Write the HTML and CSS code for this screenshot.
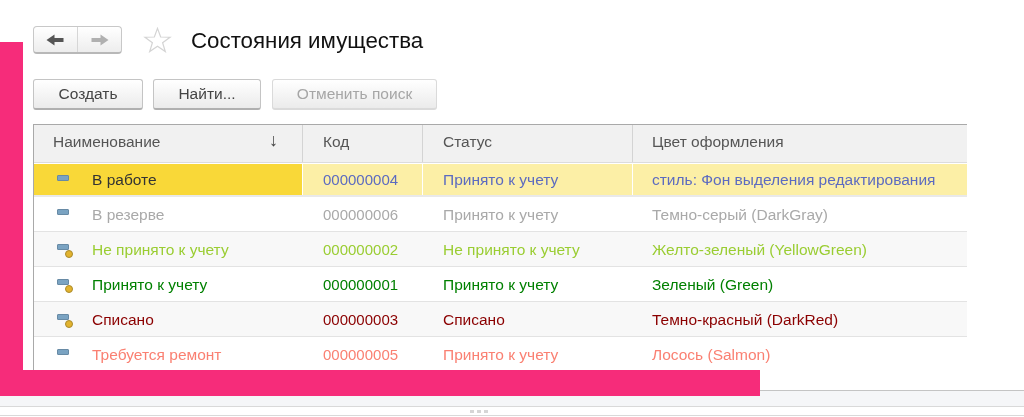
FILE: index.html
```html
<!DOCTYPE html>
<html lang="ru">
<head>
<meta charset="utf-8">
<title>Состояния имущества</title>
<link rel="stylesheet" href="styles.css">
</head>
<body>
<div class="page">
  <main class="content">
    <header class="titlebar">
      <div class="nav">
        <button class="nav-btn" aria-label="Назад"><svg width="18" height="12" viewBox="0 0 18 12"><path d="M0.500 6 L8.500 0.500 V4 H17.500 V8 H8.500 V11.500 Z" fill="#555"/></svg></button>
        <button class="nav-btn" aria-label="Вперёд"><svg width="18" height="12" viewBox="0 0 18 12"><path d="M17.500 6 L9.500 0.500 V4 H0.500 V8 H9.500 V11.500 Z" fill="#b0b0b0"/></svg></button>
      </div>
      <svg class="star" width="29" height="26" viewBox="0 0 30 28"><path d="M15 1.500 L18.400 10.800 L28.500 11 L20.500 17 L23.400 26.500 L15 20.800 L6.600 26.500 L9.500 17 L1.500 11 L11.600 10.800 Z" fill="#fff" stroke="#d4d4d4" stroke-width="1.300"/></svg>
      <h1 class="title">Состояния имущества</h1>
    </header>
    <div class="actions">
      <button class="btn btn-create">Создать</button>
      <button class="btn btn-find">Найти...</button>
      <button class="btn btn-cancel" disabled>Отменить поиск</button>
    </div>
    <div class="table">
      <div class="row head">
        <div class="cell c1">Наименование<span class="sort">↓</span></div>
        <div class="cell c2">Код</div>
        <div class="cell c3">Статус</div>
        <div class="cell c4">Цвет оформления</div>
      </div>
      <div class="row current t-blue">
        <div class="cell c1"><span class="ico"><i class="bar"></i></span><span class="name">В работе</span></div>
        <div class="cell c2 num">000000004</div>
        <div class="cell c3">Принято к учету</div>
        <div class="cell c4">стиль: Фон выделения редактирования</div>
      </div>
      <div class="row data t-gray">
        <div class="cell c1"><span class="ico"><i class="bar"></i></span>В резерве</div>
        <div class="cell c2 num">000000006</div>
        <div class="cell c3">Принято к учету</div>
        <div class="cell c4">Темно-серый (DarkGray)</div>
      </div>
      <div class="row data alt t-yg">
        <div class="cell c1"><span class="ico"><i class="bar"></i><i class="dot"></i></span>Не принято к учету</div>
        <div class="cell c2 num">000000002</div>
        <div class="cell c3">Не принято к учету</div>
        <div class="cell c4">Желто-зеленый (YellowGreen)</div>
      </div>
      <div class="row data t-green">
        <div class="cell c1"><span class="ico"><i class="bar"></i><i class="dot"></i></span>Принято к учету</div>
        <div class="cell c2 num">000000001</div>
        <div class="cell c3">Принято к учету</div>
        <div class="cell c4">Зеленый (Green)</div>
      </div>
      <div class="row data alt t-red">
        <div class="cell c1"><span class="ico"><i class="bar"></i><i class="dot"></i></span>Списано</div>
        <div class="cell c2 num">000000003</div>
        <div class="cell c3">Списано</div>
        <div class="cell c4">Темно-красный (DarkRed)</div>
      </div>
      <div class="row data last t-salmon">
        <div class="cell c1"><span class="ico"><i class="bar"></i></span>Требуется ремонт</div>
        <div class="cell c2 num">000000005</div>
        <div class="cell c3">Принято к учету</div>
        <div class="cell c4">Лосось (Salmon)</div>
      </div>
    </div>
  </main>
  <footer class="footer">
    <div class="strip"></div>
    <div class="splitter"><span></span><span></span><span></span></div>
  </footer>
  <div class="pink pink-v"></div>
  <div class="pink pink-h"></div>
</div>
</body>
</html>
```
FILE: styles.css
```css
* { box-sizing: border-box; }
html, body { margin: 0; padding: 0; background: #fff; }
body { font-family: "Liberation Sans", Arial, sans-serif; overflow: hidden; }
.page { position: relative; width: 1024px; height: 417px; overflow: hidden; }
.content { height: 391px; padding: 25px 0 0 33px; border-bottom: 1px solid #c4c4c4; filter: blur(0.35px); }

.titlebar { display: flex; align-items: center; height: 30px; }
.nav { display: flex; width: 89px; height: 28px; border: 1px solid #c8c8c8; border-bottom: 2px solid #b8b8b8; border-radius: 4px; background: linear-gradient(#fff, #ededed); }
.nav-btn { flex: 1; padding: 0; border: 0; background: none; display: flex; align-items: center; justify-content: center; }
.nav-btn:first-child svg { margin-left: -2px; }
.nav-btn + .nav-btn { border-left: 1px solid #d6d6d6; }
.star { margin-left: 21px; }
.title { margin: 2px 0 0 19px; font-size: 22.300px; font-weight: 400; color: #111; line-height: 30px; }

.actions { display: flex; margin-top: 24px; height: 31px; }
.btn { height: 31px; padding: 0; border: 1px solid #c4c4c4; border-bottom: 2px solid #b0b0b0; border-radius: 3px; background: linear-gradient(#fff, #ebebeb); font: 15.500px "Liberation Sans", Arial, sans-serif; color: #444; }
.btn-create { width: 110px; }
.btn-find { width: 108px; margin-left: 10px; }
.btn-cancel { width: 165px; margin-left: 11px; border-color: #dadada; color: #a6a6a6; }

.table { width: 934px; margin-top: 14px; border-top: 1px solid #a9a9a9; border-left: 1px solid #a9a9a9; }
.row { display: flex; height: 35px; border-bottom: 1px solid #e3e3e3; font-size: 15.500px; }
.cell { display: flex; align-items: center; padding-left: 20px; border-right: 1px solid transparent; white-space: nowrap; }
.data .cell { padding-top: 1px; }
.data .num { padding-top: 0; }
.c1 { width: 269px; padding-left: 19px; }
.c2 { width: 120px; }
.c3 { width: 210px; }
.c4 { flex: 1; border-right: 0; padding-left: 19px; }
.num { font-size: 15px; }

.head { height: 38px; background: #f1f1f1; color: #555; border-bottom: 1px solid #dcdcdc; }
.head .cell { border-right: 1px solid #d4d4d4; padding-bottom: 3px; }
.head .c4 { border-right: 0; }
.sort { margin-left: auto; margin-right: 24px; font-size: 18px; line-height: 18px; margin-top: -4px; color: #444; }

.current { background: #fcefa6; border-top: 1px solid #fff; height: 34px; border-bottom: 2px solid #e9e9e9; }
.current .cell { border-right: 1px solid #fff; }
.current .c1 { background: #f9d838; color: #333; }
.current .c4 { border-right: 0; }
.current .ico { margin-top: 1px; }

.alt { background: #f8f8f8; }
.last { border-bottom: 0; height: 34px; }

.ico { position: relative; display: block; flex: none; width: 35px; height: 16px; margin-left: 4px; margin-top: -1px; }
.bar { position: absolute; left: 0; top: 3px; width: 12px; height: 6px; background: #7aa3c2; border: 1px solid #678aa5; border-radius: 1px; }
.dot { position: absolute; left: 8px; top: 9px; width: 8px; height: 8px; border-radius: 50%; background: #e3b32e; border: 1px solid #a98a2c; }

.t-blue { color: #5c6bc0; }
.t-gray { color: #a9a9a9; }
.t-yg { color: #9acd32; }
.t-green { color: #008000; }
.t-red { color: #8b0000; }
.t-salmon { color: #fa8072; }

.footer { height: 26px; }
.strip { height: 16px; background: #f5f6f8; border-bottom: 1px solid #d9d9d9; }
.splitter { display: flex; justify-content: center; align-items: center; gap: 3px; height: 9px; border-bottom: 1px solid #d9d9d9; padding-right: 67px; }
.splitter span { width: 4px; height: 3px; background: #d6d6d6; }

.pink { position: absolute; background: #f62c7a; }
.pink-v { left: 0; top: 42px; width: 23px; height: 354px; }
.pink-h { left: 0; top: 370px; width: 760px; height: 26px; }
```
